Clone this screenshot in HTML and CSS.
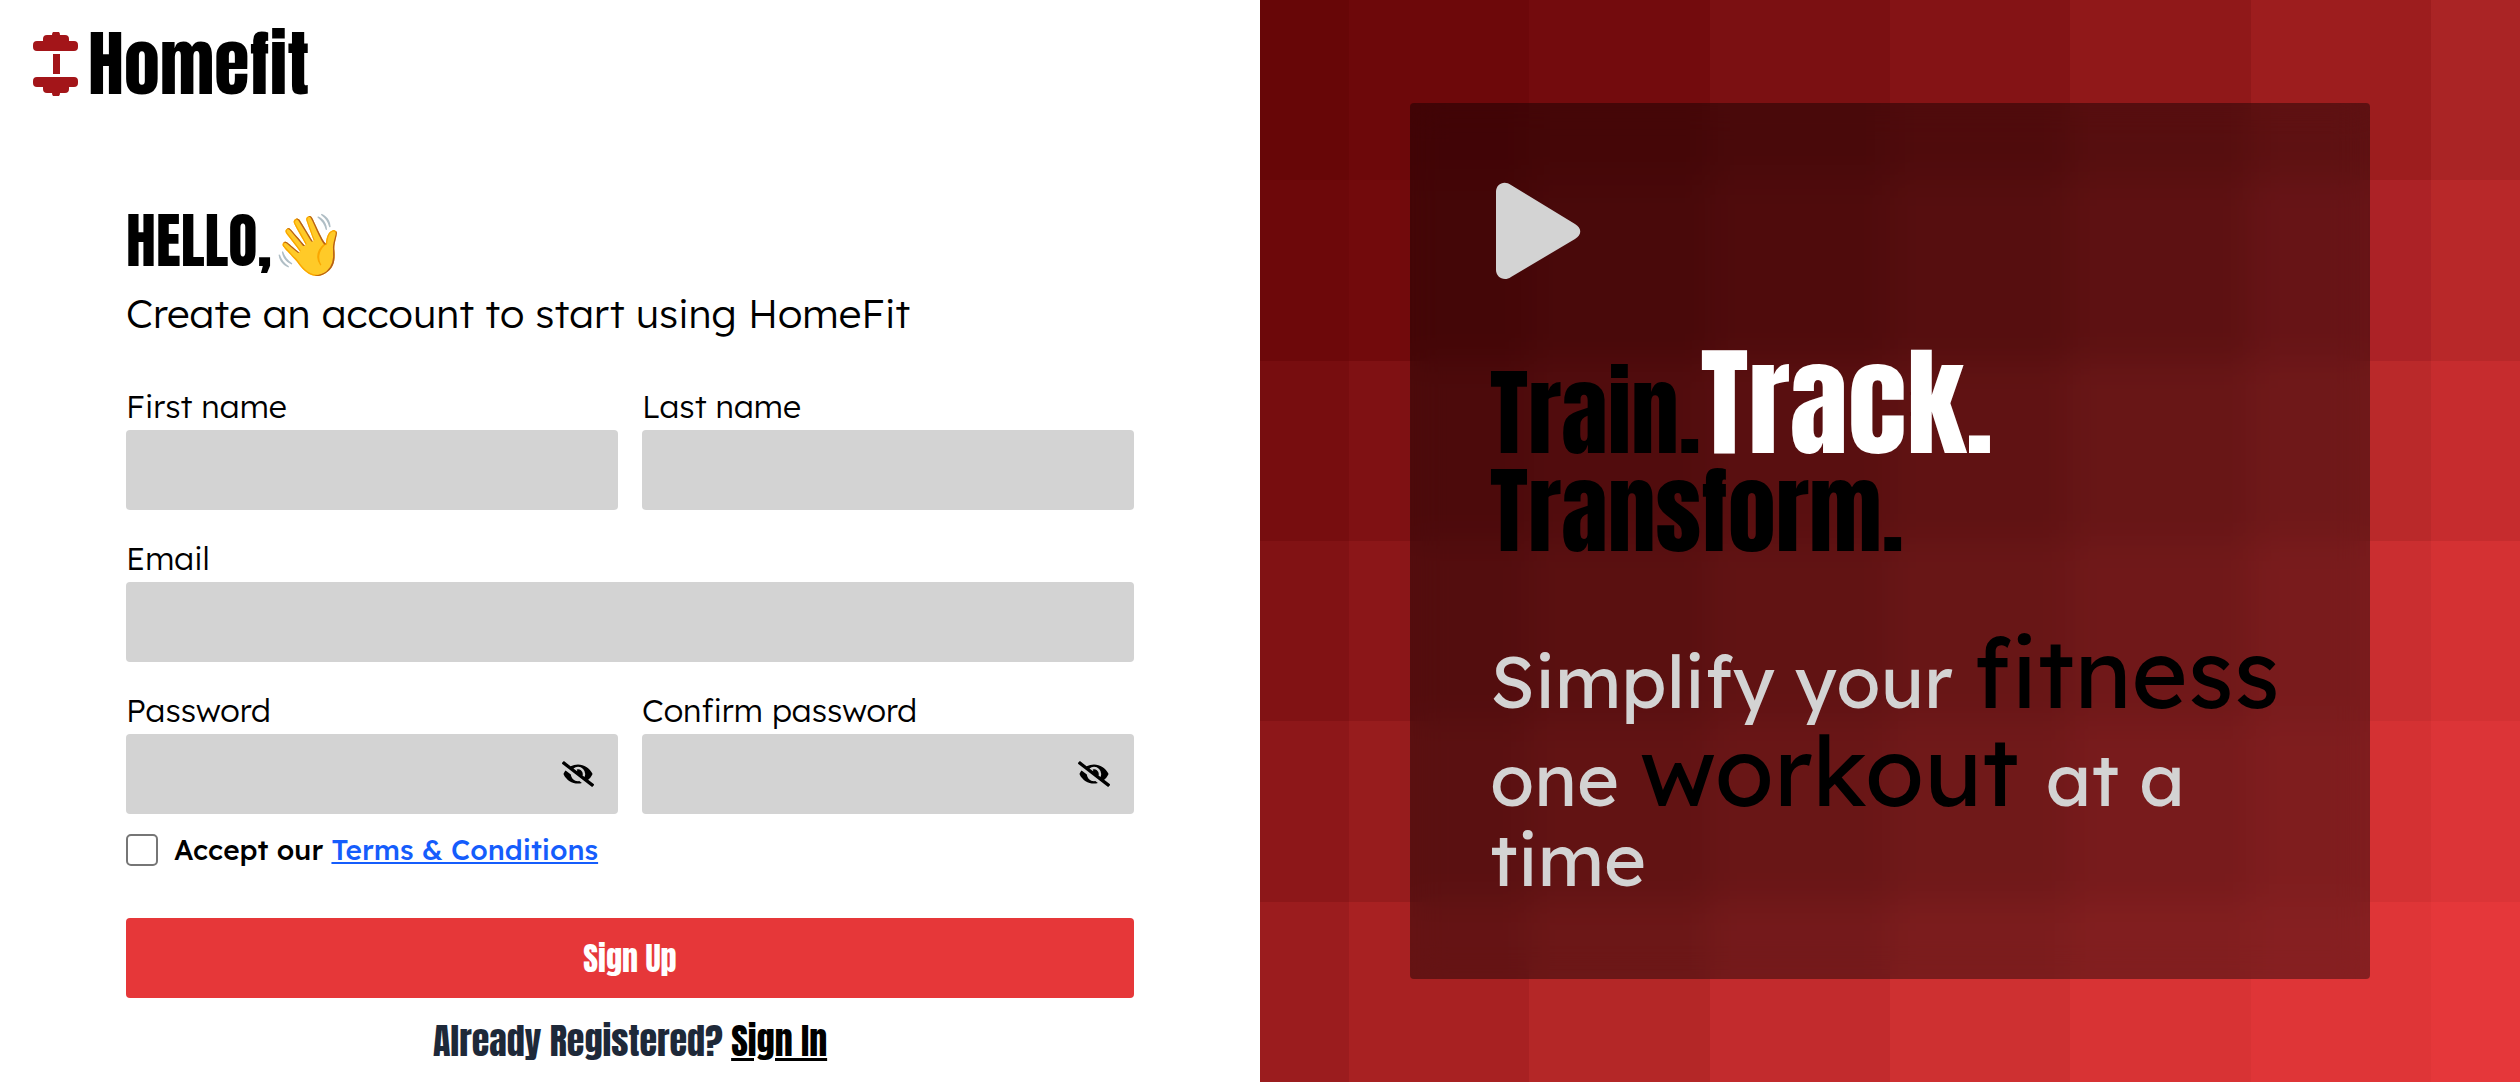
FILE: index.html
```
<!DOCTYPE html>
<html lang="en">
<head>
<meta charset="utf-8">
<title>Homefit – Sign Up</title>
<link rel="stylesheet" href="styles.css">
</head>
<body>
<main class="page">
  <section class="signup">
    <a class="logo" href="#">
      <svg class="logo-mark" viewBox="0 0 46 64" aria-hidden="true">
        <path d="M10 9V7a4 4 0 0 1 4-4h5a4 4 0 0 1 8 0h5a4 4 0 0 1 4 4v2h5a4 4 0 0 1 4 4v2a4 4 0 0 1-4 4H4a4 4 0 0 1-4-4v-2a4 4 0 0 1 4-4zM20 22h7v20h-7zM10 55v2a4 4 0 0 0 4 4h5a4 4 0 0 0 8 0h5a4 4 0 0 0 4-4v-2h5a4 4 0 0 0 4-4v-2a4 4 0 0 0-4-4H4a4 4 0 0 0-4 4v2a4 4 0 0 0 4 4z"/>
      </svg>
      <span>Homefit</span>
    </a>
    <form class="form">
      <header class="intro">
        <h1 class="hello">HELLO,👋</h1>
        <p class="lead">Create an account to start using HomeFit</p>
      </header>
      <div class="fields">
        <div class="field">
          <label for="first">First name</label>
          <input class="box" id="first" type="text">
        </div>
        <div class="field">
          <label for="last">Last name</label>
          <input class="box" id="last" type="text">
        </div>
        <div class="field wide">
          <label for="email">Email</label>
          <input class="box" id="email" type="email">
        </div>
        <div class="field">
          <label for="password">Password</label>
          <div class="secret">
            <input class="box" id="password" type="password">
            <button class="reveal" type="button" aria-label="Show password">
              <svg class="eye" viewBox="0 0 640 512"><path id="eye-off" d="M320 400c-75.850 0-137.250-58.710-142.900-133.110L72.200 185.820c-13.790 17.300-26.480 35.590-36.720 55.590a32.350 32.350 0 0 0 0 29.190C89.710 376.410 197.070 448 320 448c26.910 0 52.870-4 77.890-10.460L346 397.390a144.130 144.130 0 0 1-26 2.610zm313.820 58.100l-110.550-85.440a331.250 331.250 0 0 0 81.250-102.070 32.350 32.350 0 0 0 0-29.190C550.290 135.590 442.930 64 320 64a308.150 308.150 0 0 0-147.320 37.700L45.460 3.370A16 16 0 0 0 23 6.180L3.370 31.450A16 16 0 0 0 6.180 53.900l588.360 454.730a16 16 0 0 0 22.460-2.810l19.640-25.270a16 16 0 0 0-2.820-22.450zm-183.720-142l-39.300-30.380A94.750 94.750 0 0 0 416 256a94.760 94.760 0 0 0-121.310-92.210A47.650 47.650 0 0 1 304 192a46.640 46.640 0 0 1-1.540 10l-73.610-56.890A142.310 142.310 0 0 1 320 112a143.920 143.920 0 0 1 144 144c0 21.630-5.290 41.790-13.900 60.110z"/></svg>
            </button>
          </div>
        </div>
        <div class="field">
          <label for="confirm">Confirm password</label>
          <div class="secret">
            <input class="box" id="confirm" type="password">
            <button class="reveal" type="button" aria-label="Show password">
              <svg class="eye" viewBox="0 0 640 512"><use href="#eye-off"/></svg>
            </button>
          </div>
        </div>
      </div>
      <div class="terms">
        <input class="tick" id="accept" type="checkbox">
        <label for="accept">Accept our <a class="terms-link" href="#">Terms &amp; Conditions</a></label>
      </div>
      <button class="submit" type="submit">Sign Up</button>
      <p class="signin">Already Registered? <a class="signin-link" href="#">Sign In</a></p>
    </form>
  </section>

  <aside class="promo">
    <svg class="tiles" viewBox="0 0 1440 1080" preserveAspectRatio="xMidYMid slice" aria-hidden="true"></svg>
    <div class="card">
      <svg class="play" viewBox="0 0 96 112" aria-hidden="true">
        <path d="M6 17C6 9 14 5 21 10L85 49C92 53 92 60 85 64L21 102C14 107 6 102 6 95Z"/>
      </svg>
      <h2 class="slogan">Train.<span class="track">Track.</span> Transform.</h2>
      <p class="pitch">Simplify your <span class="key">fitness</span> one <span class="key">workout </span>at a time</p>
    </div>
  </aside>
</main>
<script src="tiles.js"></script>
</body>
</html>
```
FILE: tiles.js
```
// Fills the promo background with square tiles that brighten along the diagonal.
const rows = [
  "670607 6d080a 730b0d 7b1012 841315 901819 9d1d1e aa2425",
  "6d080a 720a0c 7a0f11 841315 8f1819 9c1d1e ac2226 b82829",
  "770d0f 7f1113 881517 951a1b a01f20 ad2526 ba292a c62c2e",
  "811214 8b1618 961b1c a22021 ae2526 bb292a ca2e30 d43133",
  "8d1719 971c1d a32021 b02526 bb2a2b c82d2f d43133 dc3437",
  "9b1c1e a82122 b42727 c22b2d ce3031 d83334 df3537 e5373a",
];
const tiles = document.querySelector(".tiles");
const size = 180;
rows.forEach((colors, row) => {
  colors.split(" ").forEach((color, col) => {
    const tile = document.createElementNS("http://www.w3.org/2000/svg", "rect");
    tile.setAttribute("x", col * size);
    tile.setAttribute("y", row * size);
    tile.setAttribute("width", size);
    tile.setAttribute("height", size);
    tile.setAttribute("fill", "#" + color);
    tile.setAttribute("shape-rendering", "crispEdges");
    tiles.append(tile);
  });
});
```
FILE: styles.css
```
* { box-sizing: border-box; margin: 0; }

body {
  font-family: Lexend, Inter, "Open Sans", sans-serif;
  font-weight: 300;
  color: #000;
  background: #fff;
}

.page { display: grid; grid-template-columns: 1fr 1fr; min-height: 100vh; }

.logo, .hello, .submit, .signin, .slogan {
  font-family: Anton, "Liberation Sans Narrow", "DejaVu Sans Condensed", sans-serif;
  font-weight: 400;
}

.signup { display: flex; flex-direction: column; }

.logo {
  display: flex;
  align-items: center;
  gap: 9px;
  padding: 16px 33px;
  font-size: 72px;
  line-height: 96px;
  color: #000;
  text-decoration: none;
}
.logo-mark { width: 46px; height: 64px; fill: #a31519; }

.form { width: 80%; margin: 0 auto; padding-top: 71px; }

.hello { font-size: 60px; line-height: 84px; }
.lead { font-size: 40px; line-height: 60px; }

.fields { display: grid; grid-template-columns: 1fr 1fr; gap: 24px; padding-top: 39px; }
.field { display: flex; flex-direction: column; font-size: 32px; line-height: 48px; }
.wide { grid-column: 1 / -1; }
.box {
  width: 100%;
  height: 80px;
  padding: 0 24px;
  border: 0;
  border-radius: 4px;
  background: #d3d3d3;
  font: inherit;
}
.secret { display: grid; align-items: center; }
.secret .box, .reveal { grid-area: 1 / 1; }
.reveal { justify-self: end; display: flex; padding: 0; margin-right: 24px; border: 0; background: none; color: #000; }
.eye { width: 32px; height: 26px; }

.terms {
  display: flex;
  align-items: center;
  gap: 16px;
  padding-top: 16px;
  font-size: 28px;
  font-weight: 500;
  line-height: 40px;
}
.tick {
  appearance: none;
  width: 32px;
  height: 32px;
  border: 2px solid #767676;
  border-radius: 5px;
  background: #fff;
}
.terms-link { color: #155dfc; }

.submit {
  display: block;
  width: 100%;
  height: 80px;
  margin-top: 48px;
  border: 0;
  border-radius: 4px;
  background: #e63739;
  color: #fff;
  font-size: 32px;
}
.signin { padding-top: 16px; font-size: 36px; line-height: 54px; text-align: center; color: #1e2939; }
.signin-link { color: #000; }

.promo { display: grid; place-items: center; }
.tiles { grid-area: 1 / 1; width: 100%; height: 100%; }
.card {
  grid-area: 1 / 1;
  width: 960px;
  max-width: 90%;
  padding: 72px 80px 80px;
  border-radius: 4px;
  background: rgba(0, 0, 0, 0.4);
  backdrop-filter: blur(16px);
}
.play { display: block; width: 96px; height: 112px; fill: #d3d3d3; }
.slogan { padding-top: 66px; font-size: 96px; line-height: 98px; }
.track { font-size: 120px; color: #fff; }
.pitch { padding-top: 63px; font-size: 72px; line-height: 80px; font-weight: 400; color: #d3d3d3; }
.key { font-size: 96px; line-height: 98px; color: #000; }
```
